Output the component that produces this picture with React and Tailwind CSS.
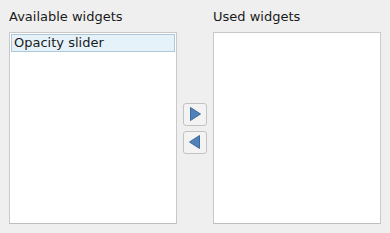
export default function App() {
  return (
    <div className="w-[390px] h-[233px] bg-[#efefef] flex pl-[9px] pr-[9px] pt-[7px] pb-[9px] text-[13px] text-[#1a1a1a]" style={{ fontFamily: '"DejaVu Sans", sans-serif' }}>
      <div className="flex flex-col w-[168px]">
        <div className="h-[19px] leading-[19px] mb-[6px]">Available widgets</div>
        <div className="flex-1 bg-white border border-[#c9c9c9] border-b-[#bdbdbd] p-px">
          <div className="h-[18px] leading-[16px] bg-[#e6f2fa] border border-[#b1c6d7] pl-[2px]">Opacity slider</div>
        </div>
      </div>
      <div className="w-[36px] flex flex-col items-center pt-[25px]">
        <div className="flex-1 flex flex-col items-center justify-center gap-[5px]">
          <button className="w-[24px] h-[23px] rounded-[3px] border border-[#c3c3c3] bg-[#f3f3f3] flex items-center justify-center">
            <svg width="14" height="16" viewBox="0 0 14 16">
              <path d="M2.5 1.5 L12.5 8 L2.5 14.5 Z" fill="#4f82b8" stroke="#3d6a9a" strokeWidth="1" strokeLinejoin="round" />
            </svg>
          </button>
          <button className="w-[24px] h-[23px] rounded-[3px] border border-[#c3c3c3] bg-[#f3f3f3] flex items-center justify-center">
            <svg width="14" height="16" viewBox="0 0 14 16">
              <path d="M11.5 1.5 L1.5 8 L11.5 14.5 Z" fill="#4f82b8" stroke="#3d6a9a" strokeWidth="1" strokeLinejoin="round" />
            </svg>
          </button>
        </div>
      </div>
      <div className="flex flex-col flex-1">
        <div className="h-[19px] leading-[19px] mb-[6px]">Used widgets</div>
        <div className="flex-1 bg-white border border-[#c9c9c9] border-b-[#bdbdbd]"></div>
      </div>
    </div>
  );
}
